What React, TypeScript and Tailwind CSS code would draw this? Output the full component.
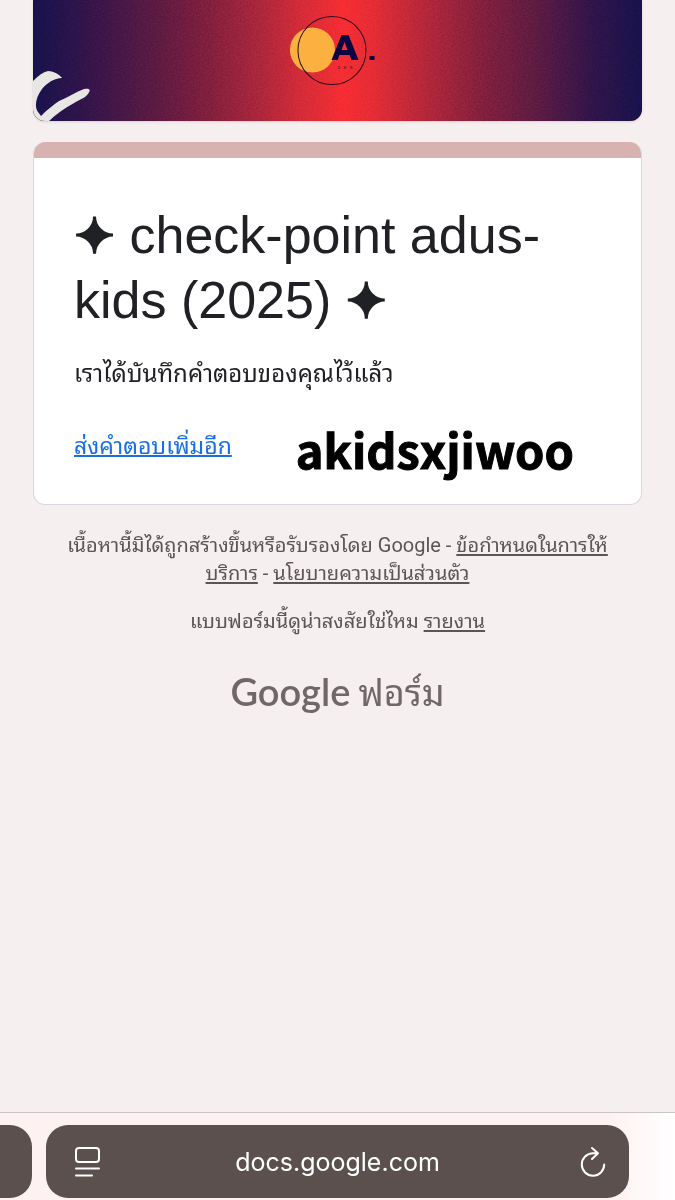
function Banner() {
  return (
    <header className="relative h-[121px] overflow-hidden rounded-b-xl bg-[#f02c32] shadow-sm">
      <svg
        className="absolute inset-0 size-full"
        viewBox="0 0 608 121"
        preserveAspectRatio="xMidYMid slice"
        role="img"
        aria-label="Adus banner"
      >
        <defs>
          <linearGradient id="banner" x1="0" y1="0" x2="1" y2="0">
            <stop offset="0" stopColor="#17124c" />
            <stop offset="0.08" stopColor="#30144a" />
            <stop offset="0.2" stopColor="#5b1a42" />
            <stop offset="0.29" stopColor="#821f3d" />
            <stop offset="0.38" stopColor="#b0273a" />
            <stop offset="0.45" stopColor="#da2b37" />
            <stop offset="0.51" stopColor="#f62d32" />
            <stop offset="0.56" stopColor="#e42c35" />
            <stop offset="0.64" stopColor="#b6273a" />
            <stop offset="0.73" stopColor="#86203d" />
            <stop offset="0.83" stopColor="#5b1b42" />
            <stop offset="0.92" stopColor="#30144a" />
            <stop offset="1" stopColor="#17124c" />
          </linearGradient>
          <filter id="grain" x="0" y="0" width="100%" height="100%" colorInterpolationFilters="sRGB">
            <feTurbulence type="fractalNoise" baseFrequency="0.6" numOctaves="2" />
            <feColorMatrix type="matrix" values="1 0 0 0 0 1 0 0 0 0 1 0 0 0 0 0 0 0 0 1" />
          </filter>
        </defs>
        <rect width="608" height="121" fill="url(#banner)" />
        <rect width="608" height="121" filter="url(#grain)" className="opacity-20 mix-blend-overlay" />
        <path
          d="M0 81C5 76 10 72 15 71C20 71 26 74 29 78C21 78 14 83 9 89C3 97 1 106 5 112L8 116L12 112C17 108 21 104 26 101C35 97 43 92 51 89C55 88 58 89 56 92C54 97 48 99 41 103C32 108 22 115 16 121H0Z"
          fill="#e8e6e4"
        />
        <circle cx="279" cy="50" r="22.5" fill="#fcb040" />
        <circle cx="298.5" cy="50.5" r="34" fill="none" stroke="#2a1024" strokeWidth="1" />
        <path d="M298 60L308 35H315L325 60H318L316 55H306L304 60ZM308 50H314L311 42Z" fill="#0b0440" fillRule="evenodd" />
        <rect x="336" y="56" width="5" height="4" fill="#0b0440" />
        <text x="304" y="69" fill="#5c1230" fontSize="6" fontFamily="Liberation Sans, sans-serif" letterSpacing="3">
          ɔes
        </text>
      </svg>
    </header>
  )
}

function Star() {
  return (
    <span className="inline-block font-['DejaVu_Sans',sans-serif] text-[49px] leading-none [-webkit-text-stroke:3px_#202124]">
      ✦
    </span>
  )
}

function ResponseCard() {
  return (
    <section className="mt-[21px] overflow-hidden rounded-xl border border-t-0 border-[#d9d7dd] bg-white">
      <div className="h-4 bg-[#d8b2b0]" />
      <div className="px-10 pt-[45px] pb-[29px]">
        <h1 className="font-['Liberation_Sans',sans-serif] text-[52px] leading-[65px] text-[#202124]">
          <Star /> check-point adus-kids (2025) <Star />
        </h1>
        <p className="mt-6 text-[24px] leading-[34px] text-[#202124]">เราได้บันทึกคำตอบของคุณไว้แล้ว</p>
        <div className="mt-8 flex items-start gap-16">
          <a href="#" className="text-[23px] leading-[48px] text-[#1a6fe0] underline underline-offset-1">
            ส่งคำตอบเพิ่มอีก
          </a>
          <span className="font-['Noto_Sans_CJK_SC',sans-serif] text-[47px] leading-[52px] font-bold text-black [-webkit-text-stroke:1px_#000]">
            akidsxjiwoo
          </span>
        </div>
      </div>
    </section>
  )
}

function Disclaimer() {
  return (
    <footer className="mt-[26px] px-6 text-center text-[20px] leading-7 text-[#5c5555]">
      <p>
        เนื้อหานี้มิได้ถูกสร้างขึ้นหรือรับรองโดย Google -{" "}
        <a href="#" className="underline underline-offset-2">ข้อกำหนดในการให้บริการ</a> -{" "}
        <a href="#" className="underline underline-offset-2">นโยบายความเป็นส่วนตัว</a>
      </p>
      <p className="mt-5">
        แบบฟอร์มนี้ดูน่าสงสัยใช่ไหม <a href="#" className="underline underline-offset-2">รายงาน</a>
      </p>
      <a href="#" className="mt-8 flex items-baseline justify-center gap-2 leading-[48px] text-[#706868]">
        <span className="font-['Lato',sans-serif] text-[38px] font-semibold">Google</span>
        <span className="text-[36px]">ฟอร์ม</span>
      </a>
    </footer>
  )
}

function BrowserBar() {
  return (
    <nav className="flex h-[88px] gap-[14px] overflow-hidden border-t border-[#cbc5c7] bg-linear-to-r from-[#fdf2f1] from-90% to-white pt-3">
      <div className="h-[73px] w-8 shrink-0 rounded-r-[22px] bg-[#5b504e]" />
      <div className="mr-[46px] flex h-[73px] flex-1 items-center justify-between rounded-[22px] bg-[#5b504e] pr-[22px] pl-7 text-white">
        <button aria-label="Page menu">
          <svg width="28" height="32" viewBox="0 0 28 32" fill="none" stroke="currentColor" strokeWidth="2" strokeLinecap="round">
            <rect x="2" y="2" width="23" height="14" rx="3" />
            <path d="M2 22.500H25M2 29.500H18" />
          </svg>
        </button>
        <span className="font-['Inter',sans-serif] text-[25px] leading-8">docs.google.com</span>
        <button aria-label="Reload">
          <svg width="34" height="32" viewBox="-6 0 34 32" fill="none" stroke="currentColor" strokeWidth="2" strokeLinecap="round" strokeLinejoin="round">
            <path d="M18.500 7.300H14A11.200 11.200 0 1 0 25.200 18.500M13 2L19 7.300L13 13" />
          </svg>
        </button>
      </div>
    </nav>
  )
}

export default function App() {
  return (
    <div className="flex min-h-screen flex-col bg-[#f5efef] font-['Roboto','Noto_Sans_Thai_Looped','Loma','Noto_Sans_Thai','Noto_Sans',sans-serif]">
      <main className="flex-1 px-[33px]">
        <Banner />
        <ResponseCard />
        <Disclaimer />
      </main>
      <BrowserBar />
    </div>
  )
}
